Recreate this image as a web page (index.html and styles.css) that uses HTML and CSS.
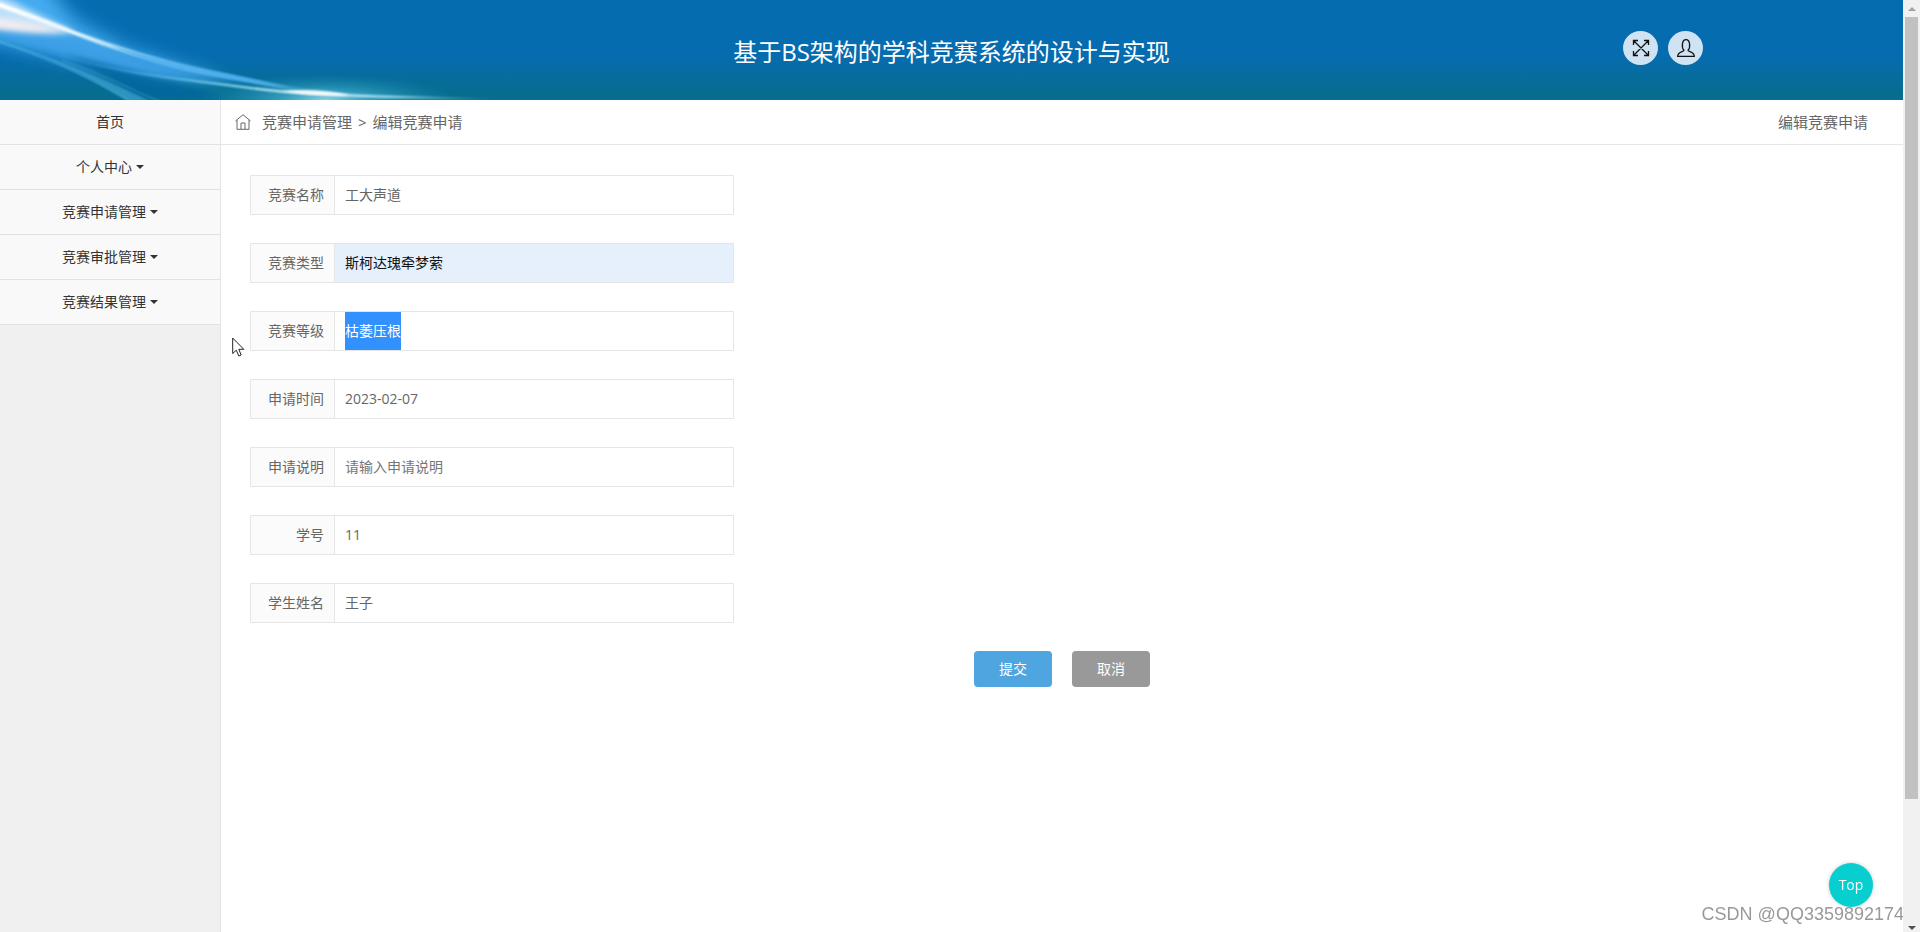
FILE: index.html
```html
<!DOCTYPE html>
<html lang="zh-CN">
<head>
<meta charset="utf-8">
<title>编辑竞赛申请</title>
<link rel="stylesheet" href="styles.css">
</head>
<body>
<header class="header">
  <svg class="header-art" viewBox="0 0 640 100" width="640" height="100" aria-hidden="true">
    <defs>
      <filter id="b1" filterUnits="userSpaceOnUse" x="-60" y="-60" width="760" height="220"><feGaussianBlur stdDeviation="0.8"/></filter>
      <filter id="b3" filterUnits="userSpaceOnUse" x="-60" y="-60" width="760" height="220"><feGaussianBlur stdDeviation="3"/></filter>
      <filter id="b10" filterUnits="userSpaceOnUse" x="-60" y="-60" width="760" height="220"><feGaussianBlur stdDeviation="9"/></filter>
      <radialGradient id="glow"><stop offset="0" stop-color="#9fe6f6"/><stop offset=".35" stop-color="#4fb9d8" stop-opacity=".7"/><stop offset="1" stop-color="#1b8fb4" stop-opacity="0"/></radialGradient>
      <linearGradient id="beam" gradientUnits="userSpaceOnUse" x1="0" y1="0" x2="300" y2="0"><stop offset="0" stop-color="#fff"/><stop offset=".25" stop-color="#e8f6ff"/><stop offset=".5" stop-color="#7cc8f6"/><stop offset=".8" stop-color="#3f9fe0"/><stop offset="1" stop-color="#5cc0e4" stop-opacity=".4"/></linearGradient>
      <linearGradient id="low" gradientUnits="userSpaceOnUse" x1="50" y1="0" x2="500" y2="0"><stop offset="0" stop-color="#3fa0e0" stop-opacity="0"/><stop offset=".25" stop-color="#4fb2e6"/><stop offset=".45" stop-color="#a8e6fa"/><stop offset=".6" stop-color="#fff"/><stop offset=".75" stop-color="#b5ebf6"/><stop offset="1" stop-color="#35a0b8" stop-opacity="0"/></linearGradient>
    </defs>
    <path d="M-30-30H35L75 20L130 50L230 82L150 78L80 60L-30 36Z" fill="#4bb2f6" opacity=".9" filter="url(#b10)"/>
    <path d="M-10 26L70 34L130 52L250 84L150 74L70 56L-10 36Z" fill="#3d9fe6" opacity=".7" filter="url(#b3)"/>
    <path d="M66 56Q140 72 230 98H140Q110 76 66 56Z" fill="#04659e" opacity=".8" filter="url(#b3)"/>
    <ellipse cx="325" cy="100" rx="130" ry="26" fill="url(#glow)" opacity=".85"/>
    <path d="M-20-10L10 0L72 31L40 30L-20 26Z" fill="#e4f3ff" opacity=".75" filter="url(#b3)"/>
    <path d="M-20 16Q30 22 76 32Q30 36-20 26Z" fill="#fff0ee" opacity=".9" filter="url(#b3)"/>
    <path d="M-10-1Q30 13 75 31Q140 55 205 70L320 92Q250 84 195 72Q130 57 72 34Q30 18-10 4Z" fill="url(#beam)" filter="url(#b1)"/>
    <path d="M110 45Q160 60 210 70T300 91Q250 83 200 74T110 45Z" fill="#51b1ee" opacity=".8" filter="url(#b1)"/>
    <path d="M55 54Q110 70 165 77T250 88T318 94T400 97T500 100" fill="none" stroke="url(#low)" stroke-width="2" filter="url(#b1)"/>
    <path d="M282 91Q318 88 350 95Q318 97 282 91Z" fill="#fff" opacity=".9" filter="url(#b1)"/>
    <path d="M-10 37Q30 50 64 63T150 101H128Q90 78 58 64T-10 40Z" fill="#46aee0" opacity=".6" filter="url(#b1)"/>
    <path d="M-5 40Q30 52 60 65T130 101M62 60Q95 72 125 86T160 101" fill="none" stroke="#63bdf0" opacity=".6" filter="url(#b1)"/>
  </svg>
  <h1 class="header-title">基于BS架构的学科竞赛系统的设计与实现</h1>
  <div class="header-tools">
    <button class="round" type="button" aria-label="全屏">
      <svg viewBox="0 0 18 18" width="18" height="18"><path d="M1.500 1.500L16.500 16.500M16.500 1.500L1.500 16.500M1.500 6V1.500H6M12 1.500H16.500V6M16.500 12V16.500H12M6 16.500H1.500V12"/></svg>
    </button>
    <button class="round" type="button" aria-label="个人中心">
      <svg viewBox="0 0 18 18" width="18" height="18"><path d="M7 11.200C4.500 9 4.600 .7 9 .7S13.500 9 11 11.200C11 13 17.300 12.200 17.300 17.300H.7C.7 12.200 7 13 7 11.200Z"/></svg>
    </button>
  </div>
</header>
<div class="layout">
  <nav class="sidebar">
    <a class="nav-item" href="#">首页</a>
    <a class="nav-item" href="#">个人中心<span class="caret"></span></a>
    <a class="nav-item" href="#">竞赛申请管理<span class="caret"></span></a>
    <a class="nav-item" href="#">竞赛审批管理<span class="caret"></span></a>
    <a class="nav-item" href="#">竞赛结果管理<span class="caret"></span></a>
  </nav>
  <main class="main">
    <div class="crumbs">
      <svg class="home" viewBox="0 0 16 16" width="16" height="16" aria-hidden="true"><path d="M.5 7L8 .7L15.500 7M2 6V15.300H14V6M6 15V9H10V15"/></svg>
      <a href="#">竞赛申请管理</a><span class="sep">&gt;</span><span>编辑竞赛申请</span>
      <span class="page-name">编辑竞赛申请</span>
    </div>
    <form class="form">
      <div class="field"><label for="f1">竞赛名称</label><input id="f1" type="text" value="工大声道"></div>
      <div class="field filled"><label for="f2">竞赛类型</label><input id="f2" type="text" value="斯柯达瑰牵梦萦"></div>
      <div class="field"><label for="f3">竞赛等级</label><input id="f3" type="text" value="枯萎压根"></div>
      <div class="field"><label for="f4">申请时间</label><input id="f4" type="text" value="2023-02-07"></div>
      <div class="field"><label for="f5">申请说明</label><input id="f5" type="text" placeholder="请输入申请说明"></div>
      <div class="field"><label for="f6">学号</label><input id="f6" type="text" value="11"></div>
      <div class="field"><label for="f7">学生姓名</label><input id="f7" type="text" value="王子"></div>
      <div class="actions">
        <button class="btn submit" type="button">提交</button>
        <button class="btn cancel" type="button">取消</button>
      </div>
    </form>
  </main>
</div>
<button class="to-top" type="button">Top</button>
<div class="watermark">CSDN @QQ3359892174</div>
<div class="scrollbar" aria-hidden="true"><span class="arrow up"></span><div class="track"><div class="thumb"></div></div><span class="arrow down"></span></div>
<svg class="pointer" viewBox="0 0 13 20" width="13" height="20" aria-hidden="true"><path d="M.7 1V16.500L4.300 13.200L6.800 19L9.200 18L6.800 12.300H11.800Z" fill="#fff" stroke="#222"/></svg>
<script src="script.js"></script>
</body>
</html>
```
FILE: styles.css
```css
* { box-sizing: border-box; }
body {
  margin: 0;
  padding-right: 17px;
  min-height: 100vh;
  display: flex;
  flex-direction: column;
  background: #fff;
  color: #666;
  font: 14px/20px "Open Sans", "Noto Sans CJK SC", sans-serif;
}
a { color: inherit; text-decoration: none; }
button, input { font: inherit; }
.header {
  position: relative;
  display: flex;
  align-items: center;
  justify-content: center;
  height: 100px;
  overflow: hidden;
  background: linear-gradient(#066cb0 0, #066cb0 55%, #066d90 92%, #066d90 100%);
}
.header-art { position: absolute; left: 0; top: 0; }
.header-title {
  position: relative;
  margin: 0;
  padding-top: 4px;
  color: #fff;
  font-size: 24px;
  font-weight: 400;
  line-height: 32px;
}
.header-tools { position: absolute; right: 200px; top: 31px; display: flex; gap: 10px; }
.round {
  display: flex;
  align-items: center;
  justify-content: center;
  width: 35px;
  height: 34px;
  padding: 0;
  border: 0;
  border-radius: 50%;
  background: #cfe3f3;
}
.round svg, .home { fill: none; stroke: #111; }
.round svg { stroke-width: 1.3; }
.layout { display: flex; flex: 1; }
.sidebar { width: 221px; border-right: 1px solid #e6e6e6; background: #f0f0f0; }
.nav-item {
  display: flex;
  align-items: center;
  justify-content: center;
  gap: 4px;
  height: 45px;
  border-bottom: 1px solid #e2e2e2;
  background: #f9f9f9;
  color: #333;
}
.caret { border: 4px solid transparent; border-top-color: #333; border-bottom: 0; }
.main { flex: 1; }
.crumbs {
  display: flex;
  align-items: center;
  height: 45px;
  padding: 0 35px 0 14px;
  border-bottom: 1px solid #e6e6e6;
  font-size: 15px;
}
.home { margin-right: 11px; stroke: #666; }
.sep { margin: 0 6px; }
.page-name { margin-left: auto; }
.form { padding: 30px 29px; }
.field {
  display: flex;
  width: 29.8%;
  height: 40px;
  margin-bottom: 28px;
  border: 1px solid #e6e6e6;
}
.field label {
  width: 84px;
  padding-right: 10px;
  border-right: 1px solid #e6e6e6;
  background: #fbfbfb;
  line-height: 38px;
  text-align: right;
}
.field input {
  flex: 1;
  min-width: 0;
  padding: 0 10px;
  border: 0;
  outline: 0;
  background: transparent;
  color: #666;
  line-height: 38px;
}
.field input::placeholder { color: #757575; }
.field input::selection { background: #3390ff; color: #fff; }
.field.filled input { background: #e6f0fc; color: #111; }
.actions { display: flex; justify-content: center; gap: 20px; }
.btn { width: 78px; height: 36px; padding: 0; border: 0; border-radius: 4px; color: #fff; }
.submit { background: #4fa5df; }
.cancel { background: #999; }
.to-top {
  position: fixed;
  right: 47px;
  bottom: 25px;
  width: 44px;
  height: 44px;
  padding: 0;
  border: 0;
  border-radius: 50%;
  background: #07cfcf;
  box-shadow: 0 0 4px rgba(0, 0, 0, .2);
  color: #fff;
}
.watermark {
  position: fixed;
  right: 16px;
  bottom: 8px;
  color: #999;
  font: 18px/20px "Liberation Sans", sans-serif;
  text-shadow: 1px 1px 0 #fff;
}
.scrollbar {
  position: fixed;
  top: 0;
  right: 0;
  bottom: 0;
  display: flex;
  flex-direction: column;
  align-items: center;
  justify-content: space-between;
  width: 17px;
  padding: 7px 0 2px;
  background: #f1f1f1;
}
.track { flex: 1; align-self: stretch; padding: 6px 2px 10px; }
.thumb { height: 87%; background: #c1c1c1; }
.arrow { border: 4px solid transparent; }
.up { border-top: 0; border-bottom-color: #a3a3a3; }
.down { border-bottom: 0; border-top-color: #505050; }
.pointer { position: absolute; left: 232px; top: 337px; }
```
FILE: script.js
```js
const level = document.getElementById("f3");
level.focus();
level.select();
```
